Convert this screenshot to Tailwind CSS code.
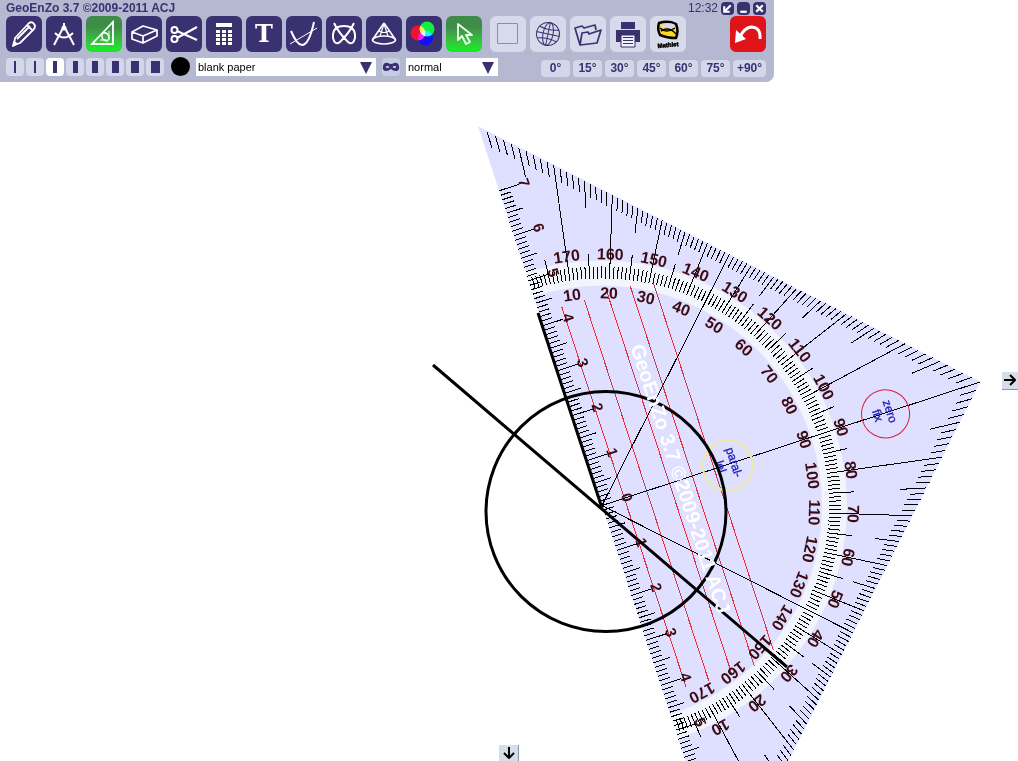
<!DOCTYPE html>
<html lang="en">
<head>
  <meta charset="UTF-8">
  <meta name="viewport" content="width=device-width, initial-scale=1.0">
  <title>GeoEnZo 3.7</title>
  <script src="https://cdn.jsdelivr.net/npm/@tailwindcss/browser@4"></script>
</head>
<body class="relative h-screen overflow-hidden bg-white font-['Liberation_Sans',Arial,sans-serif] text-[#3a3170]">

  <!-- drawing board -->
  <svg class="absolute inset-0 h-full w-full" aria-label="Drawing board">
    <g transform="translate(602 505.5) rotate(-18.1)">
      <path d="M0-399L398 0L0 399Z" fill="#dfdfff"/>
      <path d="M0-232.5A232.5 232.5 0 0 1 0 232.5" fill="none" stroke="#f3f5fd" stroke-width="25"/>
      <g stroke="#e0303f" shape-rendering="crispEdges">
        <path d="M23.5-201V199M47-201V200M71-204V200M95-200V200M118-196V191"/>
      </g>
      <path id="ticks" fill="none" stroke="#000" shape-rendering="crispEdges"/>
      <g id="labels" fill="#3c0a12" text-anchor="middle"></g>
      <circle cx="298" cy="1" r="24" fill="none" stroke="#d8203c"/>
      <circle cx="132" cy="1" r="25" fill="none" stroke="#efe9a4" stroke-width="2"/>
      <g fill="#1a1ab8" stroke="#1a1ab8" stroke-width="0.3" font-size="12" text-anchor="middle">
        <text transform="translate(299 0) rotate(90)">zero</text>
        <text transform="translate(286 0) rotate(90)">fix</text>
        <text transform="translate(135 0) rotate(90)">paral-</text>
        <text transform="translate(121 0) rotate(90)">lel</text>
      </g>
    </g>
    <g fill="none" stroke="#000" stroke-width="3">
      <circle cx="606" cy="511.5" r="120"/>
      <path d="M433 365L787 667M538 313L602 508"/>
    </g>
    <text transform="translate(602 505.5) rotate(-18.1) translate(76 -1) rotate(90)" text-anchor="middle" font-size="20" font-weight="bold" fill="#fff">GeoEnZo 3.7 ©2009-2011 ACJ</text>
  </svg>

  <button aria-label="Scroll right" class="absolute top-1/2 right-0 flex h-[18px] w-4 -translate-y-1/2 items-center justify-center border-b border-[#8c96a0] bg-[#d6dee8]">
    <svg class="h-3 w-3" viewBox="0 0 12 12" fill="none" stroke="#000" stroke-width="2"><path d="M0 6H11M6 1L11 6L6 11"/></svg>
  </button>
  <button aria-label="Scroll down" class="absolute bottom-0 left-1/2 flex h-4 w-5 -translate-x-1/2 items-center justify-center border-r border-[#8c96a0] bg-[#d6dee8]">
    <svg class="h-3 w-3" viewBox="0 0 12 12" fill="none" stroke="#000" stroke-width="2"><path d="M6 0V11M1 6L6 11L11 6"/></svg>
  </button>

  <!-- toolbar -->
  <header class="relative w-fit rounded-br-lg bg-[#b4b8d0] pr-2 pb-[5px] pl-1.5">
    <div class="flex h-4 items-center justify-between">
      <h1 class="text-xs leading-4 font-bold">GeoEnZo 3.7 ©2009-2011 ACJ</h1>
      <div class="flex items-center gap-[3px]">
        <span class="text-xs leading-4">12:32</span>
        <button aria-label="Shrink" class="h-[13px] w-[13px] rounded-sm bg-[#3a3170]"><svg viewBox="0 0 12 12" fill="none" stroke="#fff" stroke-width="2"><path d="M9 3L4 8M3 4V9H8"/></svg></button>
        <button aria-label="Minimize" class="h-[13px] w-[13px] rounded-sm bg-[#3a3170]"><svg viewBox="0 0 12 12" stroke="#fff" stroke-width="2"><path d="M3 9H9"/></svg></button>
        <button aria-label="Close" class="h-[13px] w-[13px] rounded-sm bg-[#3a3170]"><svg viewBox="0 0 12 12" stroke="#fff" stroke-width="2"><path d="M3 3L9 9M9 3L3 9"/></svg></button>
      </div>
    </div>

    <div class="flex gap-1">
      <button aria-label="Pencil" class="h-9 w-9 rounded-md bg-[#3a3170]">
        <svg viewBox="0 0 36 36" fill="none" stroke="#fff" stroke-width="1.8" stroke-linejoin="round"><path d="M8 29L9 22L23 7Q26 5 28 8Q30 10 28 13L14 27ZM21 9L27 15M11 23L24 10"/><path d="M7 30L8 26L11 28Z" fill="#fff"/></svg>
      </button>
      <button aria-label="Compass" class="h-9 w-9 rounded-md bg-[#3a3170]">
        <svg viewBox="0 0 36 36" fill="none" stroke="#fff" stroke-width="2"><path d="M18 7V12M17 12L8 29M19 12L28 29M9 17Q18 26 27 17"/><circle cx="18" cy="12" r="1.5" fill="#fff"/></svg>
      </button>
      <button aria-label="Set square" class="h-9 w-9 rounded-md bg-linear-to-b from-[#3f8c48] from-30% to-[#08f018]">
        <svg viewBox="0 0 36 36" fill="none" stroke="#fff" stroke-width="1.8"><path d="M27 6V28H6Z"/><path d="M23 15V24H14" stroke-width="1"/><path d="M16 18Q15 25 22 25M17 17Q23 16 23 23" stroke-width="1.5"/></svg>
      </button>
      <button aria-label="Eraser" class="h-9 w-9 rounded-md bg-[#3a3170]">
        <svg viewBox="0 0 36 36" fill="none" stroke="#fff" stroke-width="1.7" stroke-linejoin="round"><path d="M6 16L17 10L31 14L31 20L17 27L6 23ZM6 16L17 20L31 14M17 20V27"/></svg>
      </button>
      <button aria-label="Scissors" class="h-9 w-9 rounded-md bg-[#3a3170]">
        <svg viewBox="0 0 36 36" fill="none" stroke="#fff" stroke-width="2"><circle cx="8.5" cy="14" r="3"/><circle cx="8.5" cy="23" r="3"/><path d="M11 15L31 24M11 22L31 11"/></svg>
      </button>
      <button aria-label="Calculator" class="h-9 w-9 rounded-md bg-[#3a3170]">
        <svg viewBox="0 0 36 36" fill="#fff"><path d="M10 7h16v4H10zM10 14h4v3h-4zM16 14h4v3h-4zM22 14h4v3h-4zM10 18h4v3h-4zM16 18h4v3h-4zM22 18h4v3h-4zM10 22h4v3h-4zM16 22h4v3h-4zM22 22h4v3h-4zM10 26h4v3h-4zM16 26h4v3h-4zM22 26h4v3h-4z"/></svg>
      </button>
      <button class="h-9 w-9 rounded-md bg-[#3a3170] font-['DejaVu_Serif',serif] text-2xl leading-9 font-bold text-white">T</button>
      <button aria-label="Graph" class="h-9 w-9 rounded-md bg-[#3a3170]">
        <svg viewBox="0 0 36 36" fill="none" stroke="#fff" stroke-width="2"><path d="M5 15Q11 29 16 29Q23 29 28 6"/><path d="M4 28L31 12" stroke-width="1"/></svg>
      </button>
      <button aria-label="Curves" class="h-9 w-9 rounded-md bg-[#3a3170]">
        <svg viewBox="0 0 36 36" fill="none" stroke="#fff" stroke-width="2"><path d="M8 7Q12 16 22 26Q27 30 29 22Q30 10 18 10Q6 10 7 22Q9 30 14 26Q24 16 28 7"/></svg>
      </button>
      <button aria-label="Solids" class="h-9 w-9 rounded-md bg-[#3a3170]">
        <svg viewBox="0 0 36 36" fill="none" stroke="#fff" stroke-width="1.6"><path d="M18 7L7 23M18 7L29 23"/><ellipse cx="18" cy="24" rx="11.5" ry="4"/><path d="M18 8L14 20M18 8L22 20M13 15Q18 18 23 15" stroke-width="1.2"/></svg>
      </button>
      <button aria-label="Colours" class="h-9 w-9 rounded-md bg-[#3a3170]">
        <svg viewBox="0 0 36 36"><g class="isolate"><circle class="mix-blend-screen" cx="12" cy="17" r="7.5" fill="#f01030"/><circle class="mix-blend-screen" cx="19.5" cy="22" r="7.5" fill="#1010f0"/><circle class="mix-blend-screen" cx="21" cy="13" r="7.5" fill="#10f040"/></g></svg>
      </button>
      <button aria-label="Pointer" class="h-9 w-9 rounded-md bg-linear-to-b from-[#3f8c48] from-30% to-[#08f018]">
        <svg viewBox="0 0 36 36" fill="none" stroke="#e8ffe8" stroke-width="1.8" stroke-linejoin="round"><path d="M12 8L12 24L16 20L20 28L24 26L20 19L26 19Z"/></svg>
      </button>

      <button aria-label="Background" class="ml-1 h-9 w-9 rounded-md bg-[#d7daea]">
        <svg viewBox="0 0 36 36" fill="none" stroke="#8c8ab0"><path d="M7.5 7.5h20v20h-20z"/></svg>
      </button>
      <button aria-label="Web" class="h-9 w-9 rounded-md bg-[#d7daea]">
        <svg viewBox="0 0 36 36" fill="none" stroke="#3a3170"><g transform="rotate(12 18 18)"><circle cx="18" cy="18" r="11.5"/><ellipse cx="18" cy="18" rx="5" ry="11.5"/><path d="M18 6V30M6 18H30M8 12Q18 15 28 12M8 24Q18 21 28 24"/></g></svg>
      </button>
      <button aria-label="Open" class="h-9 w-9 rounded-md bg-[#d7daea]">
        <svg viewBox="0 0 36 36" fill="none" stroke="#3a3170" stroke-width="1.7" stroke-linejoin="round"><path d="M10 29L5 12L12 10L14 12L25 9L26 14"/><path d="M10 29L12 17L18 16L19 18L31 14L27 27Z" fill="#d7daea"/></svg>
      </button>
      <button aria-label="Print" class="h-9 w-9 rounded-md bg-[#d7daea]">
        <svg viewBox="0 0 36 36" fill="#3a3170"><path d="M11 6h14v7H11zM6 14h24v12H6z"/><path d="M11 19h14v12H11z" fill="#f0f1fa" stroke="#3a3170"/><path d="M13 21h10v1H13zM13 24h10v1H13zM13 27h10v1H13z"/></svg>
      </button>
      <button aria-label="Mathlet" class="h-9 w-9 rounded-md bg-[#d7daea]">
        <svg viewBox="0 0 36 36"><path d="M9 7Q18 4 26 8Q29 15 26 22Q17 22 10 19Q7 13 9 7Z" fill="#ffd820" stroke="#000" stroke-width="2.5"/><path d="M11 14Q16 8 19 13Q22 16 25 12L24 8Q17 6 11 9Z" fill="#d7daea"/><path d="M10 12Q16 18 25 12M11 15Q19 10 26 18" fill="none" stroke="#000" stroke-width="1.5"/><text transform="rotate(-5 18 29)" x="18" y="31" text-anchor="middle" font-size="6" font-weight="bold" fill="#000" stroke="#000" stroke-width="0.5">Mathlet</text></svg>
      </button>
      <button aria-label="Undo" class="ml-auto h-9 w-9 rounded-md bg-[#e01418]">
        <svg viewBox="0 0 36 36" fill="none" stroke="#fff" stroke-width="3"><path d="M30 23Q31 11 21 11Q14 12 10 21"/><path d="M5 27L6 14L16 23Z" fill="#fff" stroke="none"/></svg>
      </button>
    </div>

    <div class="flex items-center pt-1">
      <div class="mr-[7px] flex gap-0.5">
        <button aria-label="Line width 1" class="grid h-[18px] w-[18px] place-items-center rounded-sm bg-[#d2d7ea]"><span class="h-3 w-0.5 bg-[#3a3170]"></span></button>
        <button aria-label="Line width 2" class="grid h-[18px] w-[18px] place-items-center rounded-sm bg-[#d2d7ea]"><span class="h-3 w-0.5 bg-[#3a3170]"></span></button>
        <button aria-label="Line width 3" class="grid h-[18px] w-[18px] place-items-center rounded-sm bg-white"><span class="h-3 w-1 bg-[#3a3170]"></span></button>
        <button aria-label="Line width 4" class="grid h-[18px] w-[18px] place-items-center rounded-sm bg-[#d2d7ea]"><span class="h-3 w-[5px] bg-[#3a3170]"></span></button>
        <button aria-label="Line width 5" class="grid h-[18px] w-[18px] place-items-center rounded-sm bg-[#d2d7ea]"><span class="h-3 w-1.5 bg-[#3a3170]"></span></button>
        <button aria-label="Line width 6" class="grid h-[18px] w-[18px] place-items-center rounded-sm bg-[#d2d7ea]"><span class="h-3 w-[7px] bg-[#3a3170]"></span></button>
        <button aria-label="Line width 7" class="grid h-[18px] w-[18px] place-items-center rounded-sm bg-[#d2d7ea]"><span class="h-3 w-2 bg-[#3a3170]"></span></button>
        <button aria-label="Line width 8" class="grid h-[18px] w-[18px] place-items-center rounded-sm bg-[#d2d7ea]"><span class="h-3 w-[9px] bg-[#3a3170]"></span></button>
      </div>
      <button aria-label="Colour" class="h-[19px] w-[19px] rounded-full bg-black"></button>
      <div class="relative ml-1.5">
        <select aria-label="Paper" class="block h-[18px] w-[180px] appearance-none bg-white px-0.5 text-[11px] leading-[18px] text-black"><option>blank paper</option></select>
        <svg class="pointer-events-none absolute top-1 right-1 h-3 w-3" viewBox="0 0 12 12" fill="#3a3170"><path d="M0 0H12L6 12Z"/></svg>
      </div>
      <button aria-label="Mask" class="ml-1.5 h-[18px] w-[18px] rounded-sm bg-[#c8cce2]">
        <svg viewBox="0 0 18 18"><path d="M1 8Q2 4 6 5Q9 7 12 5Q16 4 17 8Q18 13 14 13Q11 13 9 11Q7 13 4 13Q0 13 1 8Z" fill="#3a3170"/><ellipse cx="5.5" cy="9" rx="1.8" ry="1" fill="#c8cce2"/><ellipse cx="12.5" cy="9" rx="1.8" ry="1" fill="#c8cce2"/></svg>
      </button>
      <div class="relative ml-1.5">
        <select aria-label="Mode" class="block h-[18px] w-[92px] appearance-none bg-white px-0.5 text-[11px] leading-[18px] text-black"><option>normal</option></select>
        <svg class="pointer-events-none absolute top-1 right-1 h-3 w-3" viewBox="0 0 12 12" fill="#3a3170"><path d="M0 0H12L6 12Z"/></svg>
      </div>
      <div class="mt-1 ml-[43px] flex gap-[3px] text-xs leading-[17px] font-bold">
        <button class="h-[17px] w-[29px] rounded-sm bg-[#d2d7ea]">0°</button>
        <button class="h-[17px] w-[29px] rounded-sm bg-[#d2d7ea]">15°</button>
        <button class="h-[17px] w-[29px] rounded-sm bg-[#d2d7ea]">30°</button>
        <button class="h-[17px] w-[29px] rounded-sm bg-[#d2d7ea]">45°</button>
        <button class="h-[17px] w-[29px] rounded-sm bg-[#d2d7ea]">60°</button>
        <button class="h-[17px] w-[29px] rounded-sm bg-[#d2d7ea]">75°</button>
        <button class="h-[17px] w-[33px] rounded-sm bg-[#d2d7ea]">+90°</button>
      </div>
    </div>
  </header>
</body>

<script>
  // set square: x points at the right angle, y runs along the long side
  const CM = 47.3;
  const EDGE = 398;
  const labels = document.getElementById("labels");
  let d = "";

  function addText(text, transform, size) {
    const t = document.createElementNS("http://www.w3.org/2000/svg", "text");
    t.textContent = text;
    t.setAttribute("transform", transform);
    t.setAttribute("font-size", size);
    t.setAttribute("font-weight", "bold");
    labels.appendChild(t);
  }

  function ray(deg, r1, r2) {
    const a = deg * Math.PI / 180;
    d += `M${Math.sin(a) * r1} ${-Math.cos(a) * r1}L${Math.sin(a) * r2} ${-Math.cos(a) * r2}`;
  }

  // ruler in millimetres
  for (let mm = -70; mm <= 70; mm++) {
    const len = mm % 10 === 0 ? 21 : mm % 5 === 0 ? 17 : 11;
    d += `M0 ${mm * CM / 10}h${len}`;
  }
  // the lower end of the ruler runs off the board after 5 cm
  for (let cm = -7; cm <= 5; cm++) {
    addText(Math.abs(cm), `translate(21 ${cm * CM}) rotate(90)`, 15);
  }

  // protractor in degrees
  for (let deg = 1; deg < 180; deg++) {
    const a = deg * Math.PI / 180;
    const k = Math.sin(a) + Math.abs(Math.cos(a));
    const edge = EDGE / k;
    if (deg % 10 === 0) {
      ray(deg, 227, edge);
      addText(180 - deg, `rotate(${deg}) translate(0 -246)`, 16);
      addText(deg, `rotate(${deg}) translate(0 -207)`, 16);
    } else {
      ray(deg, 227, deg % 5 === 0 ? 252 : 239);
      ray(deg, (EDGE - (deg % 5 === 0 ? 33 : 17)) / k, edge);
    }
  }
  ray(45, 0, 282);
  ray(90, 0, EDGE);
  ray(135, 0, 282);
  document.getElementById("ticks").setAttribute("d", d);
</script>
</html>
